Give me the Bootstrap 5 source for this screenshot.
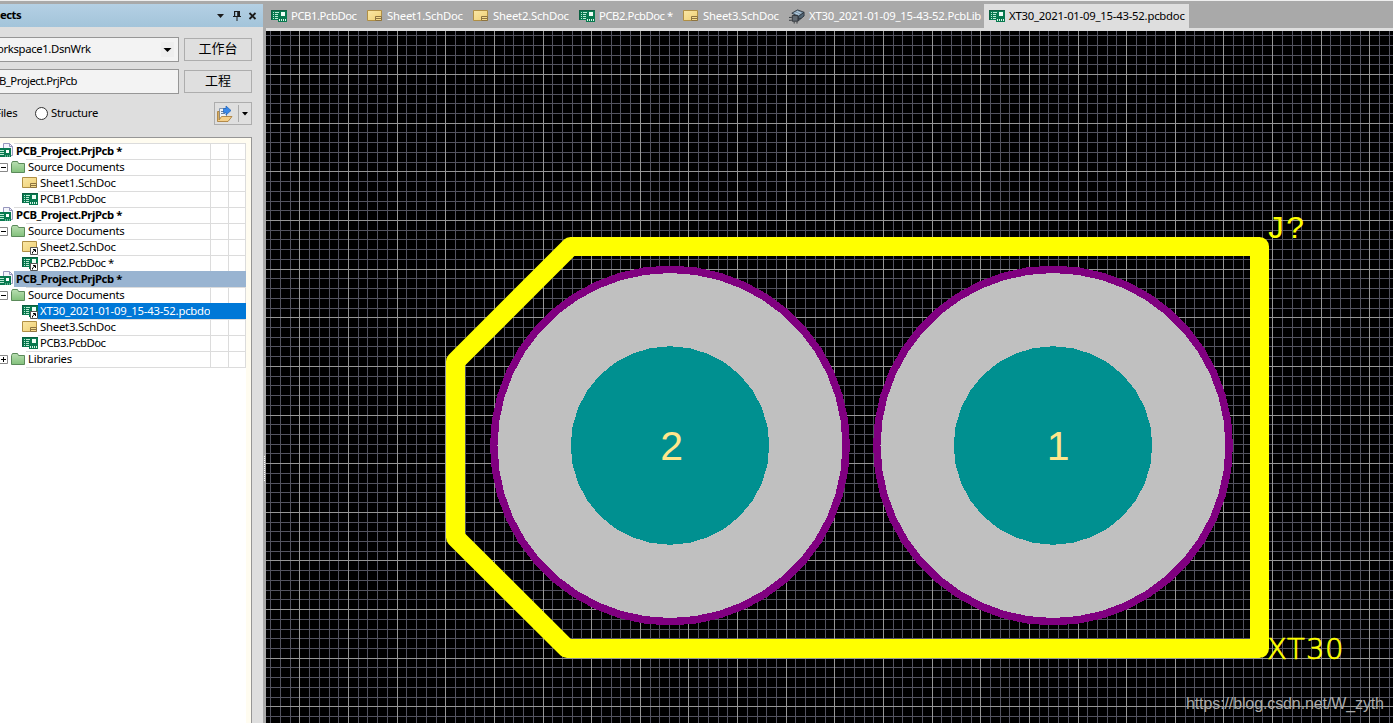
<!DOCTYPE html>
<html lang="zh-CN">
<head>
<meta charset="utf-8">
<title>PCB Editor</title>
<link href="https://cdn.jsdelivr.net/npm/bootstrap@5.3.0/dist/css/bootstrap.min.css" rel="stylesheet">
<style>
body{font:11.3px/16px "Noto Sans","Noto Sans CJK SC",sans-serif;letter-spacing:-.22px;color:#000;background:#a9a9a9;height:723px;border-top:1px solid #eee;white-space:nowrap}
b{letter-spacing:-.39px}
svg{display:block;flex:none}
.side{width:263px;margin-top:3px;background:#dedede}
.titlebar{height:23px;background:linear-gradient(#b4d0e4,#a3c4da);padding-right:6px}
.titlebar b{padding-bottom:2px;letter-spacing:-.5px}
.controls{width:252px;height:110px;padding-top:10px}
.ctlrow{margin-bottom:7px}
.field{width:179px;height:25px;background:#f3f3f3;border:1px solid #969696;border-left:0}
.field>span:first-child{padding-bottom:2px}
.wsname{margin-left:-3px;letter-spacing:-.35px}
.prjname{margin-left:-1px;letter-spacing:-.5px}
.dropper{width:13px;height:15px;background:#eee;margin-right:4px}
.gbtn{height:23px;border:1px solid #adadad;background:#dfdfdf;font-size:13px;letter-spacing:0}
.w68{width:68px;padding-bottom:3px}
.files{width:40px;margin-left:-5px;padding-bottom:2px}
.struct{margin-left:3px;padding-bottom:2px}
.splitbtn{width:38px}
.radio-dot{width:13px;height:13px;border:1px solid #333;background:#fff;border-radius:50%}
.tree{width:252px;border:1px solid #969696;border-left:0;border-bottom:0;background:#fffcf0;padding:5px 5px 0 0}
.treerow{height:16px}
.ind{height:16px;flex:none}
.l1{width:14px}.l2{width:26px}.l3{width:38px}
.cellx{border-top:1px solid #dcdcdc;height:16px;line-height:13px;padding-left:2px;min-width:0}
.col1{width:18px;height:16px;border:solid #dcdcdc;border-width:1px 0 0 1px}
.col2{border-right-width:1px}
.treeend{margin-left:26px;border-top:1px solid #dcdcdc}
.pcbname{letter-spacing:-.45px}
.hl{background:#99b4d1}.sel{background:#0078d7;color:#fff}
.hl.cellx,.sel.cellx,.hl.col1,.sel.col1{border-color:transparent}
.splitter{width:3px}
.grip{margin-top:216px}
.tabs{height:27px;padding-top:3px;color:#fff}
.doctab{height:24px;gap:4px;padding-left:5px}
.doctab.active{background:#dedede;color:#000}
.board{border-top:3px solid #dedede;background:#000}
</style>
</head>
<body class="d-flex overflow-hidden">
<svg width="0" height="0" class="position-absolute"><defs>
<linearGradient id="fg" x2="0" y2="1"><stop stop-color="#b9dfb2"/><stop offset="1" stop-color="#82c07b"/></linearGradient>
<linearGradient id="sg" x2="1" y2="1"><stop stop-color="#fae7a6"/><stop offset="1" stop-color="#efcf73"/></linearGradient>
<symbol id="pcb" viewBox="0 0 16 12"><path fill="#08794f" d="M0 0h16v10H0z"/><path fill="#0b5f40" d="M0 0h16v1H0zM0 0h1v10H0z"/><path stroke="#b9ead3" d="M2 2.500h1M4 2.500h4M2 4.500h1M4 4.500h3M2 6.500h1M4 6.500h3M2 8.500h1M4 8.500h3"/><path fill="#eefff7" d="M10 2h4v4h-4z"/><path fill="#08794f" d="M7 9h9v3H7z"/><path stroke="#d5f5e6" stroke-width="2" stroke-dasharray="1 1" d="M8 10h7"/></symbol>
<symbol id="sch" viewBox="0 0 16 12"><path fill="url(#sg)" stroke="#b08f45" d="M.5.5h14v10H.5z"/><path fill="#f6dc8c" stroke="#8d7340" d="M8.500 6.500h6v4h-6zM9 8.500h5"/></symbol>
<symbol id="fold" viewBox="0 0 14 12"><path fill="url(#fg)" stroke="#5b8a5a" d="M.5 11.500v-9l1-2h5l1 2h6v9z"/></symbol>
<symbol id="prj" viewBox="0 0 14 16"><path fill="#f4f4fb" stroke="#9797bd" d="M3.500.5h6l3 3v9h-9z"/><path fill="none" stroke="#9797bd" d="M9.500.5v3h3"/><path fill="#08794f" d="M0 5h11v9H0z"/><path stroke="#b9ead3" d="M0 7.500h4M0 9.500h4M0 11.500h4M5 13h1M7 13h1M9 13h1"/><path fill="#fff" d="M6 7h3v3H6z"/></symbol>
<symbol id="lnk" viewBox="0 0 8 8"><path fill="#fff" stroke="#555" d="M.5.5h7v7h-7z"/><path fill="none" stroke="#000" d="M2.500 6.500V5L5 3M3 2.500h2.500V5"/></symbol>
<symbol id="minus" viewBox="0 0 9 9"><path fill="#fff" stroke="#888" d="M-.5.5h8v8h-8z"/><path stroke="#000" d="M1 4.500h5"/></symbol>
<symbol id="plus" viewBox="0 0 9 9"><path fill="#fff" stroke="#888" d="M-.5.5h8v8h-8z"/><path stroke="#000" d="M1 4.500h5M3.500 2v5"/></symbol>
<symbol id="lib" viewBox="0 0 17 15"><path fill="#7894aa" stroke="#303840" d="M3 4l6-3.500L16 3l-6 4.500z"/><path fill="#526675" stroke="#303840" d="M10 7.500L16 3v4l-6 5z"/><path stroke="#c5d8e6" d="M6 3.500l5 2M8 2l5 2"/><path fill="#626a72" stroke="#30343a" d="M3.500 6.500h6v6h-6z"/><path stroke="#30343a" d="M0 8.500h3M0 11.500h3M5.500 13v2M8.500 13v2M10 9.500h3"/></symbol>
</defs></svg>

<aside class="side d-flex flex-column flex-shrink-0">
  <div class="titlebar d-flex align-items-center">
    <b class="flex-grow-1">ects</b>
    <svg width="42" height="12" viewBox="0 0 42 12"><path d="M2 4h7l-3.500 4zM19 1h6v5h-6zM18 6h8v1h-8zM21.500 7h1v4h-1z" fill="#1b1b1b"/><path fill="#b0cde1" d="M20.200 2h2v4h-2z"/><path d="M34.500 3l6 6M40.500 3l-6 6" stroke="#1b1b1b" stroke-width="1.800"/></svg>
  </div>
  <div class="controls d-flex flex-column">
    <div class="ctlrow d-flex align-items-center justify-content-between">
      <div class="field d-flex align-items-center justify-content-between"><span class="wsname">orkspace1.DsnWrk</span><span class="dropper d-flex align-items-center"><svg width="13" height="6" viewBox="0 0 13 6"><path d="M2.500 1h8l-4 4z"/></svg></span></div>
      <div class="gbtn w68 d-flex align-items-center justify-content-center">工作台</div>
    </div>
    <div class="d-flex align-items-center justify-content-between">
      <div class="field d-flex align-items-center"><span class="prjname">B_Project.PrjPcb</span></div>
      <div class="gbtn w68 d-flex align-items-center justify-content-center">工程</div>
    </div>
    <div class="d-flex align-items-center mt-2">
      <span class="files">Files</span><span class="radio-dot"></span><span class="struct flex-grow-1">Structure</span>
      <div class="gbtn splitbtn d-flex align-items-center">
        <svg width="36" height="21" viewBox="0 0 36 21"><path fill="#edf2f8" stroke="#8798ad" d="M4.500 5.500h7v10h-7z"/><path stroke="#6681a2" d="M6 8.500h4M6 10.500h4"/><path fill="#3988e8" stroke="#1c60b8" stroke-width=".7" d="M8.500 5.500H11V3l5 4.500-5 4.500V9.500H8.500z"/><path fill="#f4cf89" stroke="#a4762e" stroke-width=".8" d="M2.500 8.500v10h10.500l4-5h-10.500l-2.500 3.500v-8.500z"/><path stroke="#aaa" d="M23.500 2v17"/><path d="M27 9h6l-3 3.500z"/></svg>
      </div>
    </div>
  </div>
  <div class="tree flex-grow-1"><div class="bg-white h-100" id="tree"></div></div>
</aside>
<div class="splitter flex-shrink-0 d-flex align-items-center"><svg class="grip" width="3" height="28"><path d="M1.500 0v26" stroke="#fff" stroke-dasharray="1 1"/></svg></div>
<main class="flex-grow-1 d-flex flex-column">
  <nav class="tabs d-flex" id="tabs"></nav>
  <div class="board flex-grow-1">
    <svg width="1127" height="692" viewBox="266 31 1127 692">
      <path id="minor" stroke="#53535f" shape-rendering="crispEdges"/>
      <path id="major" stroke="#969696" shape-rendering="crispEdges"/>
      <path fill="none" stroke="#ff0" stroke-width="19" stroke-linejoin="round" d="M570.500 246.500H1259.500V648.500H567L455.500 537.500V361.500Z"/>
      <g id="pads" shape-rendering="crispEdges"></g>
      <g fill="#ffe68c" font-family="Liberation Sans" font-size="41" text-anchor="middle"><text x="671.500" y="460">2</text><text x="1058" y="460">1</text></g>
      <g fill="#ff0" letter-spacing="0"><text x="1266 1286" y="237.500" font-family="Liberation Mono" font-size="32">J?</text><text x="1267 1287 1306 1325" y="659" font-family="DejaVu Sans" font-weight="200" font-size="29" stroke="#ff0" stroke-width=".7">XT30</text></g>
      <text x="1186" y="709" fill="#aaa" font-family="Liberation Sans" font-size="16" letter-spacing="0" textLength="198">https://blog.csdn.net/W_zyth</text>
    </svg>
  </div>
</main>
<script>
const use=(id,w,h,c='')=>`<svg class="${c}" width="${w}" height="${h}"><use href="#${id}"/></svg>`;
// project tree: level, icon, label, linked, row style
const rows=[[1,'prj','PCB_Project.PrjPcb *'],[2,'minus','Source Documents'],[3,'sch','Sheet1.SchDoc'],[3,'pcb','PCB1.PcbDoc'],
[1,'prj','PCB_Project.PrjPcb *'],[2,'minus','Source Documents'],[3,'sch','Sheet2.SchDoc',1],[3,'pcb','PCB2.PcbDoc *',1],
[1,'prj','PCB_Project.PrjPcb *',0,'hl'],[2,'minus','Source Documents'],[3,'pcb','XT30_2021-01-09_15-43-52.pcbdo',1,'sel'],
[3,'sch','Sheet3.SchDoc'],[3,'pcb','PCB3.PcbDoc'],[2,'plus','Libraries']];
// PCB document names are set slightly tighter
const label=t=>t.startsWith('PCB')?`<span class="pcbname">${t}</span>`:`<span>${t}</span>`;
document.getElementById('tree').innerHTML=rows.map(([l,i,t,k,s=''])=>{
 const ic=l==1?use('prj',14,16):l==2?use(i,11,9)+use('fold',14,12):use(i,16,12,'ms-auto');
 const link=k?`<span class="position-absolute bottom-0 end-0">${use('lnk',8,8)}</span>`:'';
 return `<div class="treerow d-flex"><div class="ind l${l} d-flex align-items-center position-relative">${ic}${link}</div><div class="cellx flex-grow-1 ${s}">${l==1?`<b>${t}</b>`:label(t)}</div><div class="col1 flex-shrink-0 ${s}"></div><div class="col1 col2 flex-shrink-0 ${s}"></div></div>`}).join('')+'<div class="treeend"></div>';
// minus/plus boxes keep their natural size inside the wider slot
document.querySelectorAll('.l2 svg:first-child use').forEach(u=>{u.setAttribute('width',9);u.setAttribute('height',9)});
// document tabs: icon, label, width
document.getElementById('tabs').innerHTML=[['pcb','PCB1.PcbDoc',96],['sch','Sheet1.SchDoc',106],['sch','Sheet2.SchDoc',106],['pcb','PCB2.PcbDoc *',104],['sch','Sheet3.SchDoc',106],['lib','XT30_2021-01-09_15-43-52.PcbLib',200],['pcb','XT30_2021-01-09_15-43-52.pcbdoc',205]].map(([i,t,w],n)=>`<div class="doctab d-flex align-items-center ${n==6?'active':''}" style="width:${w}px">${use(i,i=='lib'?16:16,i=='lib'?15:12)}${label(t)}</div>`).join('');
// grid: every fifth line is a major one
const d=['',''],P=48.637/5;
for(let i=-10;i<120;i++){const m=i%5?0:1,x=Math.round(299.35+i*P)+.5,y=Math.round(74.1+i*P)+.5;
 if(x>266&&x<1393)d[m]+=`M${x} 31V723`;if(y>31&&y<723)d[m]+=`M266 ${y}H1393`}
minor.setAttribute('d',d[0]);major.setAttribute('d',d[1]);
const gon=(cx,r,f,n)=>`<polygon fill="${f}" points="${[...Array(n)].map((_,i)=>(cx+r*Math.cos(i*2*Math.PI/n)).toFixed(1)+','+(445.5+r*Math.sin(i*2*Math.PI/n)).toFixed(1)).join(' ')}"/>`;
pads.innerHTML=[670,1053].map(c=>gon(c,180,'#800080',44)+gon(c,172.5,'#c0c0c0',44)+gon(c,99.3,'#009090',32)).join('');
</script>
<script src="https://cdn.jsdelivr.net/npm/bootstrap@5.3.0/dist/js/bootstrap.bundle.min.js"></script>
</body>
</html>
